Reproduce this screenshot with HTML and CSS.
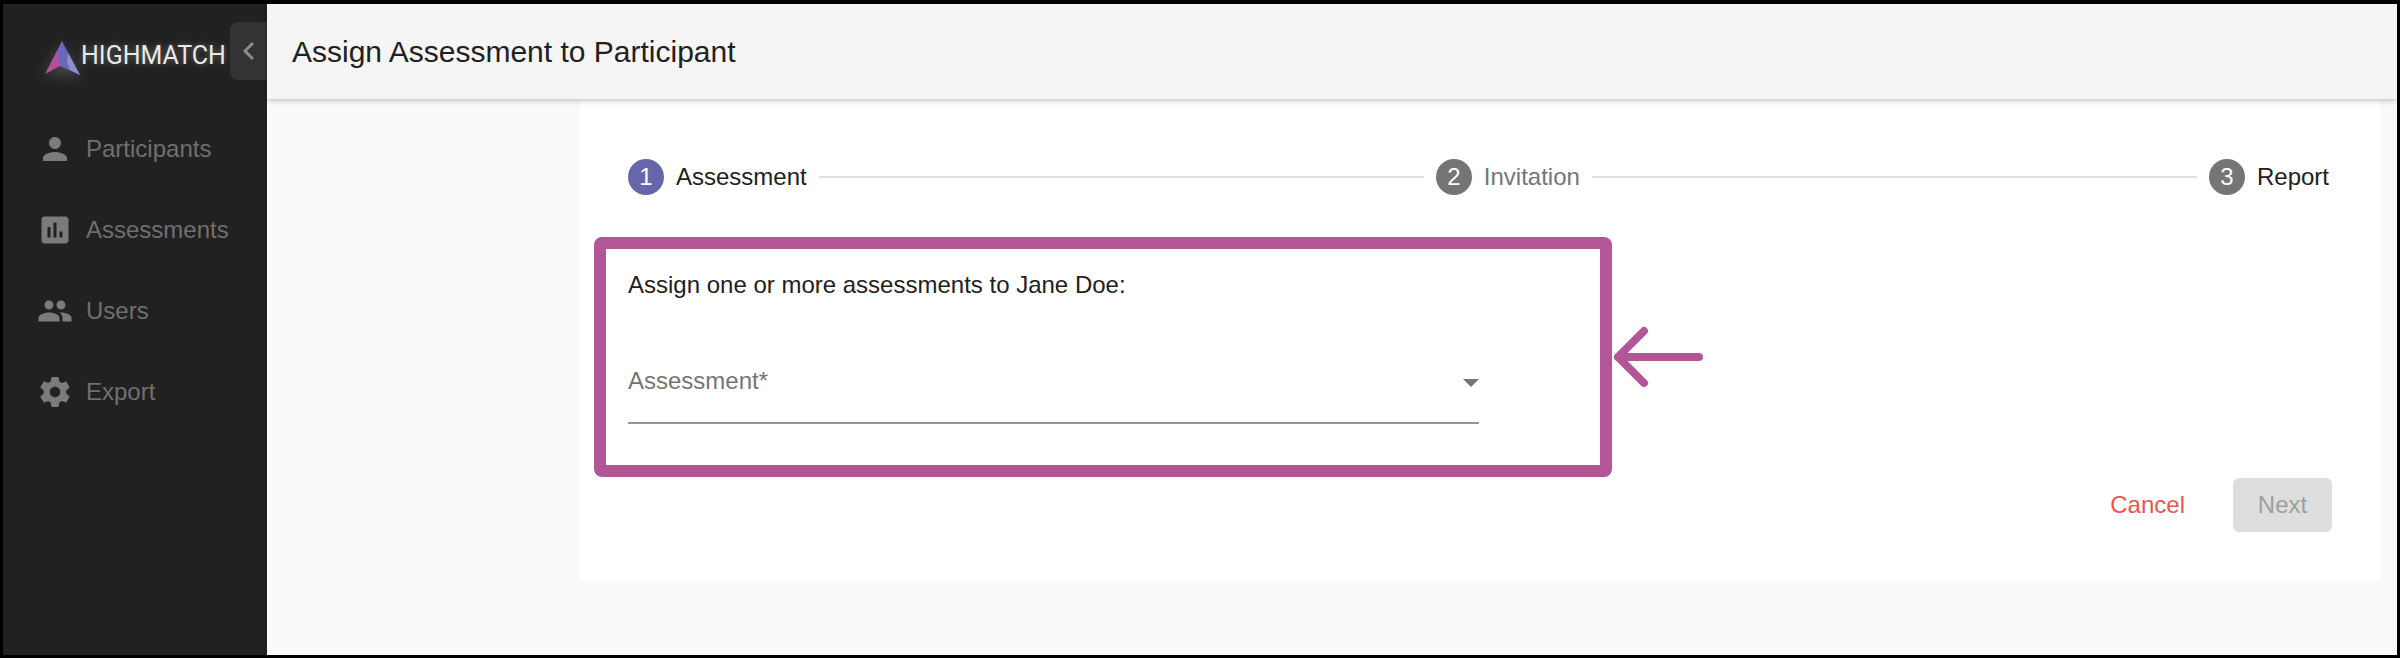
FILE: index.html
```html
<!DOCTYPE html>
<html lang="en">
<head>
<meta charset="utf-8">
<title>Assign Assessment to Participant</title>
<link rel="stylesheet" href="styles.css">
</head>
<body>
<div class="frame">
  <aside class="sidebar">
    <div class="brand">
      <svg class="logo" viewBox="0 0 38 36" width="38" height="36">
        <polygon points="18,1 1,34 16,26" fill="#b3509c"/>
        <polygon points="18,1 36,35 16,26 13,12" fill="#6a66b8"/>
        <polygon points="24,13 36,35 26,30 23,21" fill="#8d8fc9"/>
      </svg>
      <span class="wordmark">HIGHMATCH</span>
      <div class="collapse">
        <svg viewBox="0 0 14 20" width="14" height="20"><path d="M11 2 3 10l8 8" fill="none" stroke="#8a8a8a" stroke-width="3"/></svg>
      </div>
    </div>
    <nav class="nav">
      <a class="nav-item">
        <svg viewBox="0 0 24 24" class="nav-icon"><path d="M12 12c2.21 0 4-1.79 4-4s-1.79-4-4-4-4 1.79-4 4 1.79 4 4 4zm0 2c-2.67 0-8 1.34-8 4v2h16v-2c0-2.66-5.33-4-8-4z"/></svg>
        <span>Participants</span>
      </a>
      <a class="nav-item">
        <svg viewBox="0 0 24 24" class="nav-icon"><path d="M19 3H5c-1.1 0-2 .9-2 2v14c0 1.1.9 2 2 2h14c1.1 0 2-.9 2-2V5c0-1.1-.9-2-2-2zM9 17H7v-7h2v7zm4 0h-2V7h2v10zm4 0h-2v-4h2v4z"/></svg>
        <span>Assessments</span>
      </a>
      <a class="nav-item">
        <svg viewBox="0 0 24 24" class="nav-icon"><path d="M16 11c1.66 0 2.99-1.34 2.99-3S17.66 5 16 5c-1.66 0-3 1.34-3 3s1.34 3 3 3zm-8 0c1.66 0 2.99-1.34 2.99-3S9.66 5 8 5C6.34 5 5 6.34 5 8s1.34 3 3 3zm0 2c-2.33 0-7 1.17-7 3.5V19h14v-2.5c0-2.33-4.67-3.5-7-3.5zm8 0c-.29 0-.62.02-.97.05 1.16.84 1.97 1.97 1.97 3.45V19h6v-2.5c0-2.33-4.67-3.5-7-3.5z"/></svg>
        <span>Users</span>
      </a>
      <a class="nav-item">
        <svg viewBox="0 0 24 24" class="nav-icon"><path d="M19.43 12.98c.04-.32.07-.64.07-.98s-.03-.66-.07-.98l2.11-1.65c.19-.15.24-.42.12-.64l-2-3.46c-.12-.22-.39-.3-.61-.22l-2.49 1c-.52-.4-1.08-.73-1.69-.98l-.38-2.65C14.46 2.18 14.25 2 14 2h-4c-.25 0-.46.18-.49.42l-.38 2.65c-.61.25-1.17.59-1.69.98l-2.49-1c-.23-.09-.49 0-.61.22l-2 3.46c-.13.22-.07.49.12.64l2.11 1.65c-.04.32-.07.65-.07.98s.03.66.07.98l-2.11 1.65c-.19.15-.24.42-.12.64l2 3.46c.12.22.39.3.61.22l2.49-1c.52.4 1.08.73 1.69.98l.38 2.65c.03.24.24.42.49.42h4c.25 0 .46-.18.49-.42l.38-2.65c.61-.25 1.17-.59 1.69-.98l2.49 1c.23.09.49 0 .61-.22l2-3.46c.12-.22.07-.49-.12-.64l-2.11-1.65zM12 15.5c-1.93 0-3.5-1.57-3.5-3.5s1.57-3.5 3.5-3.5 3.5 1.57 3.5 3.5-1.57 3.5-3.5 3.5z"/></svg>
        <span>Export</span>
      </a>
    </nav>
  </aside>
  <main class="main">
    <header class="topbar"><h1 class="title">Assign Assessment to Participant</h1></header>
    <div class="content">
      <section class="card">
        <ol class="stepper">
          <li class="step step-active"><span class="step-num">1</span><span class="step-label">Assessment</span></li>
          <li class="step-line"></li>
          <li class="step step-muted"><span class="step-num">2</span><span class="step-label">Invitation</span></li>
          <li class="step-line"></li>
          <li class="step"><span class="step-num">3</span><span class="step-label">Report</span></li>
        </ol>
        <div class="form-row">
          <div class="highlight">
            <p class="prompt">Assign one or more assessments to Jane Doe:</p>
            <div class="select">
              <span class="select-label">Assessment*</span>
              <span class="caret"></span>
            </div>
          </div>
          <svg class="arrow" viewBox="0 0 92 62" width="92" height="62">
            <path d="M87 31H6M32 5 6 31l26 26" fill="none" stroke="#b35695" stroke-width="8" stroke-linecap="round" stroke-linejoin="round"/>
          </svg>
        </div>
        <div class="actions">
          <button class="btn-cancel" type="button">Cancel</button>
          <button class="btn-next" type="button" disabled>Next</button>
        </div>
      </section>
    </div>
  </main>
</div>
</body>
</html>
```
FILE: styles.css
```css
* { box-sizing: border-box; }
html, body { margin: 0; height: 100%; }
body { font-family: "Liberation Sans", Arial, sans-serif; background: #000; overflow: hidden; }
.frame {
  display: flex;
  height: 658px;
  border: solid #000;
  border-width: 4px 3px 3px 3px;
  background: #fafafa;
}
.sidebar { width: 264px; flex: none; background: #212121; display: flex; flex-direction: column; }
.brand { height: 104px; display: flex; align-items: flex-start; padding-left: 41px; position: relative; }
.logo { margin-top: 36px; flex: none; filter: drop-shadow(0 5px 7px rgba(255,255,255,.22)); }
.wordmark {
  margin-top: 38px;
  margin-left: -1px;
  font-family: "Roboto", sans-serif;
  font-size: 25px;
  line-height: 28px;
  font-weight: 400;
  letter-spacing: 0;
  color: #e8e8e8;
  text-shadow: 0 0 6px rgba(255,255,255,.35);
}
.collapse {
  position: absolute;
  right: 0;
  top: 18px;
  width: 37px;
  height: 58px;
  background: #333;
  border-radius: 8px 0 0 8px;
  display: flex;
  align-items: center;
  justify-content: center;
}
.nav { display: flex; flex-direction: column; }
.nav-item { height: 81px; display: flex; align-items: center; gap: 13px; padding-left: 34px; color: #707070; font-size: 24px; }
.nav-icon { width: 36px; height: 36px; fill: #7b7b7b; flex: none; }
.main { flex: 1; min-width: 0; display: flex; flex-direction: column; }
.topbar {
  height: 95px;
  flex: none;
  background: #f5f5f5;
  display: flex;
  align-items: center;
  padding-left: 25px;
  box-shadow: 0 2px 5px rgba(0,0,0,.22);
  position: relative;
}
.title { margin: 0; font-size: 30px; font-weight: 400; color: #212121; }
.content { flex: 1; padding-left: 313px; padding-right: 17px; }
.card { height: 481px; background: #fff; padding: 60px 0 0 14px; }
.stepper { list-style: none; margin: 0; padding: 0 51px 0 34px; display: flex; align-items: center; }
.step { display: flex; align-items: center; gap: 12px; flex: none; }
.step-num {
  width: 36px; height: 36px; border-radius: 50%;
  background: #757575; color: #fff; font-size: 24px;
  display: flex; align-items: center; justify-content: center;
}
.step-active .step-num { background: #6667ab; }
.step-label { font-size: 24px; color: #212121; }
.step-muted .step-label { color: #757575; }
.step-line { flex: 1; height: 2px; background: #e0e0e0; margin: 0 12px; }
.form-row { display: flex; align-items: center; margin-top: 42px; }
.highlight {
  width: 1018px;
  height: 240px;
  border: 12px solid #b35695;
  border-radius: 8px;
  padding: 21px 0 0 22px;
}
.prompt { margin: 0; font-size: 24px; line-height: 30px; color: #212121; }
.select {
  width: 851px;
  height: 57px;
  margin-top: 67px;
  border-bottom: 2px solid #949494;
  display: flex;
  justify-content: space-between;
}
.select-label { font-size: 24px; line-height: 28px; color: #757575; }
.caret {
  width: 0; height: 0;
  margin-top: 12px;
  border-left: 8px solid transparent;
  border-right: 8px solid transparent;
  border-top: 8px solid #757575;
}
.arrow { flex: none; }
.actions { display: flex; justify-content: flex-end; align-items: center; padding-right: 48px; margin-top: 1px; }
button { font: inherit; border: 0; background: none; }
.btn-cancel { font-size: 24px; color: #e8574d; margin-right: 48px; padding: 0; }
.btn-next {
  width: 99px; height: 54px; border-radius: 6px;
  background: #dedede; color: #9e9e9e; font-size: 24px;
}
```
